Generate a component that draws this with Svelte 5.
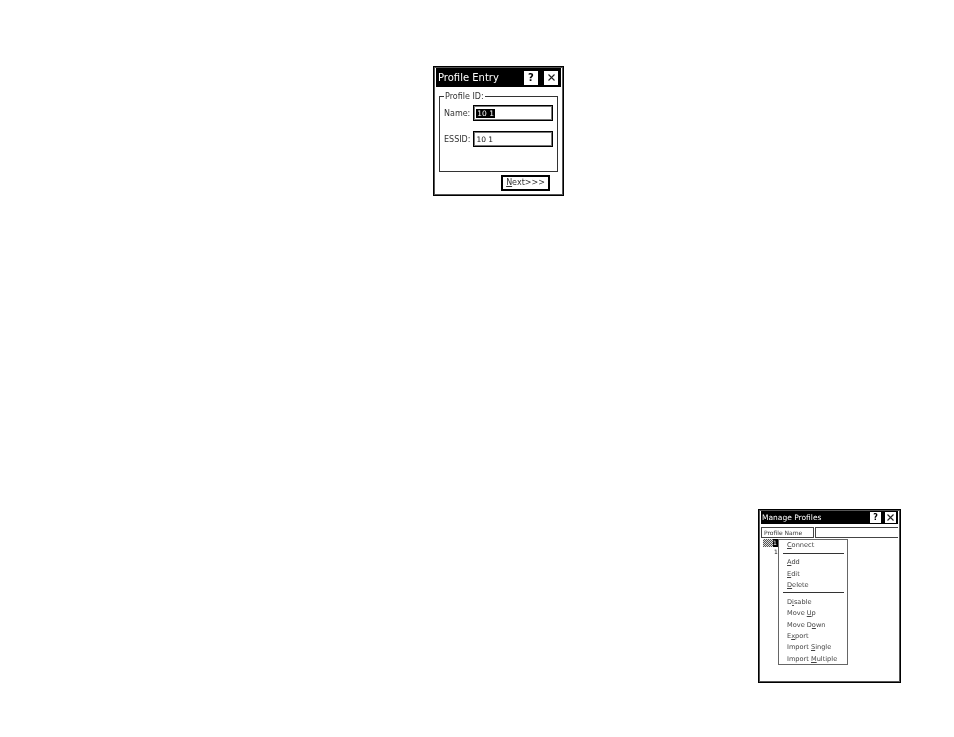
<script>
  const menuTop = [{ label: 'Connect', key: 'C' }];
  const menuMid = [
    { label: 'Add', key: 'A' },
    { label: 'Edit', key: 'E' },
    { label: 'Delete', key: 'D' },
  ];
  const menuEnd = [
    { label: 'Disable', key: 'i', at: 1 },
    { label: 'Move Up', key: 'U', at: 5 },
    { label: 'Move Down', key: 'o', at: 6 },
    { label: 'Export', key: 'x', at: 1 },
    { label: 'Import Single', key: 'S', at: 7 },
    { label: 'Import Multiple', key: 'M', at: 7 },
  ];
</script>

{#snippet menuItem(item)}
  {@const at = item.at ?? 0}
  <div class="item">{item.label.slice(0, at)}<u>{item.label[at]}</u>{item.label.slice(at + 1)}</div>
{/snippet}

{#snippet closeIcon()}
  <svg width="9" height="9" viewBox="0 0 9 9">
    <path d="M1.5 1.5 L7.5 7.5 M7.5 1.5 L1.5 7.5" stroke="#222" stroke-width="1.1" fill="none" />
  </svg>
{/snippet}

<div class="page">
  <!-- Profile Entry dialog -->
  <div class="win entry">
    <div class="title big">
      <span class="title-text">Profile Entry</span>
      <span class="tbtn q">?</span>
      <span class="tbtn">{@render closeIcon()}</span>
    </div>
    <div class="entry-body">
      <fieldset>
        <legend>Profile ID:</legend>
        <div class="row">
          <span class="lbl">Name:</span>
          <div class="input"><span class="sel">10 1</span></div>
        </div>
        <div class="row">
          <span class="lbl">ESSID:</span>
          <div class="input">10 1</div>
        </div>
      </fieldset>
      <div class="foot">
        <div class="next"><u>N</u>ext&gt;&gt;&gt;</div>
      </div>
    </div>
  </div>

  <!-- Manage Profiles dialog -->
  <div class="win manage">
    <div class="title small">
      <span class="title-text">Manage Profiles</span>
      <span class="tbtn q">?</span>
      <span class="tbtn">{@render closeIcon()}</span>
    </div>
    <div class="head">
      <div class="col">Profile Name</div>
      <div class="col rest"></div>
    </div>
    <div class="tree">
      <span class="node-icon"></span><span class="node-sel">1</span>
      <div class="sub">1</div>
    </div>
    <div class="menu">
      {#each menuTop as item}{@render menuItem(item)}{/each}
      <div class="sep first"></div>
      {#each menuMid as item}{@render menuItem(item)}{/each}
      <div class="sep"></div>
      {#each menuEnd as item}{@render menuItem(item)}{/each}
    </div>
  </div>
</div>

<style>
  :global(body) {
    margin: 0;
    background: #fff;
  }

  .page {
    position: relative;
    width: 954px;
    height: 737px;
    overflow: hidden;
    background: #fff;
    font-family: "DejaVu Sans", sans-serif;
    color: #111;
    filter: grayscale(1) blur(0.25px);
  }

  .win {
    position: absolute;
    box-sizing: border-box;
    border: 1px solid #000;
    outline: 1px solid #555;
    outline-offset: -2px;
    background: #fff;
    padding: 1px 2px 2px;
    display: flex;
    flex-direction: column;
  }

  .entry {
    left: 433px;
    top: 66px;
    width: 131px;
    height: 130px;
  }

  .manage {
    left: 758px;
    top: 509px;
    width: 143px;
    height: 174px;
  }

  .title {
    background: #000;
    color: #fff;
    display: flex;
    align-items: center;
    flex-shrink: 0;
  }

  .title-text {
    flex: 1;
    white-space: nowrap;
  }

  .title.big {
    height: 19px;
    font-size: 10px;
    padding: 0 3px 0 2px;
    gap: 6px;
  }

  .title.small {
    height: 13px;
    font-size: 7.5px;
    padding: 0 2px 0 1px;
    gap: 4px;
  }

  .tbtn {
    background: #fff;
    color: #000;
    display: flex;
    align-items: center;
    justify-content: center;
    font-weight: bold;
  }

  .big .tbtn {
    width: 14px;
    height: 14px;
    font-size: 10px;
  }

  .small .tbtn {
    width: 11px;
    height: 11px;
    font-size: 8px;
  }

  .entry-body {
    flex: 1;
    padding: 0 3px;
    display: flex;
    flex-direction: column;
    font-size: 8px;
  }

  fieldset {
    margin: 5px 0 0;
    padding: 0 4px 0 4px;
    height: 80px;
    box-sizing: border-box;
    border: 1px solid #333;
    min-width: 0;
  }

  legend {
    padding: 0 1px;
    margin-left: 0;
    font-size: 8px;
    line-height: 9px;
    color: #333;
  }

  .row {
    display: flex;
    align-items: center;
    gap: 3px;
    height: 16px;
    margin-top: 4px;
    margin-bottom: 10px;
  }

  .lbl {
    flex: 1;
    color: #333;
  }

  .input {
    box-sizing: border-box;
    width: 80px;
    height: 16px;
    border: 1px solid #000;
    outline: 1px solid #777;
    outline-offset: -2px;
    padding: 3px 2px;
    font-size: 7.5px;
    line-height: 9px;
  }

  .sel {
    background: #000;
    color: #fff;
    display: inline-block;
    padding: 0 1px;
  }

  .foot {
    display: flex;
    justify-content: flex-end;
    padding: 3px 8px 0 0;
  }

  .next {
    box-sizing: border-box;
    width: 49px;
    height: 16px;
    border: 2px solid #000;
    text-align: center;
    line-height: 12px;
    font-size: 8px;
    color: #333;
    white-space: nowrap;
  }

  .head {
    display: flex;
    margin-top: 3px;
    gap: 1px;
    font-size: 6px;
    color: #333;
  }

  .col {
    box-sizing: border-box;
    width: 53px;
    height: 11px;
    border: 1px solid #444;
    line-height: 9px;
    padding-left: 2px;
    white-space: nowrap;
  }

  .col.rest {
    flex: 1;
    border-right: none;
  }

  .tree {
    position: relative;
    font-size: 6px;
    line-height: 8px;
    padding-left: 2px;
    margin-top: 1px;
  }

  .node-icon {
    display: inline-block;
    width: 10px;
    height: 8px;
    background: repeating-conic-gradient(#555 0 25%, #ddd 0 50%) 0 0 / 2px 2px;
    vertical-align: top;
  }

  .node-sel {
    display: inline-block;
    background: #000;
    color: #fff;
    width: 8px;
    height: 8px;
  }

  .sub {
    padding-left: 11px;
    margin-top: 1px;
  }

  .menu {
    position: absolute;
    left: 19px;
    top: 29px;
    box-sizing: border-box;
    width: 70px;
    height: 126px;
    background: #fff;
    border: 1px solid #666;
    padding: 0 3px 0 4px;
    font-size: 6.6px;
    color: #444;
  }

  .item {
    height: 11.3px;
    line-height: 11px;
    padding-left: 4px;
    white-space: nowrap;
  }

  .sep {
    border-top: 1px solid #333;
    margin: 1px 0 4px;
  }

  .sep.first {
    margin: 2px 0 3px;
  }
</style>
